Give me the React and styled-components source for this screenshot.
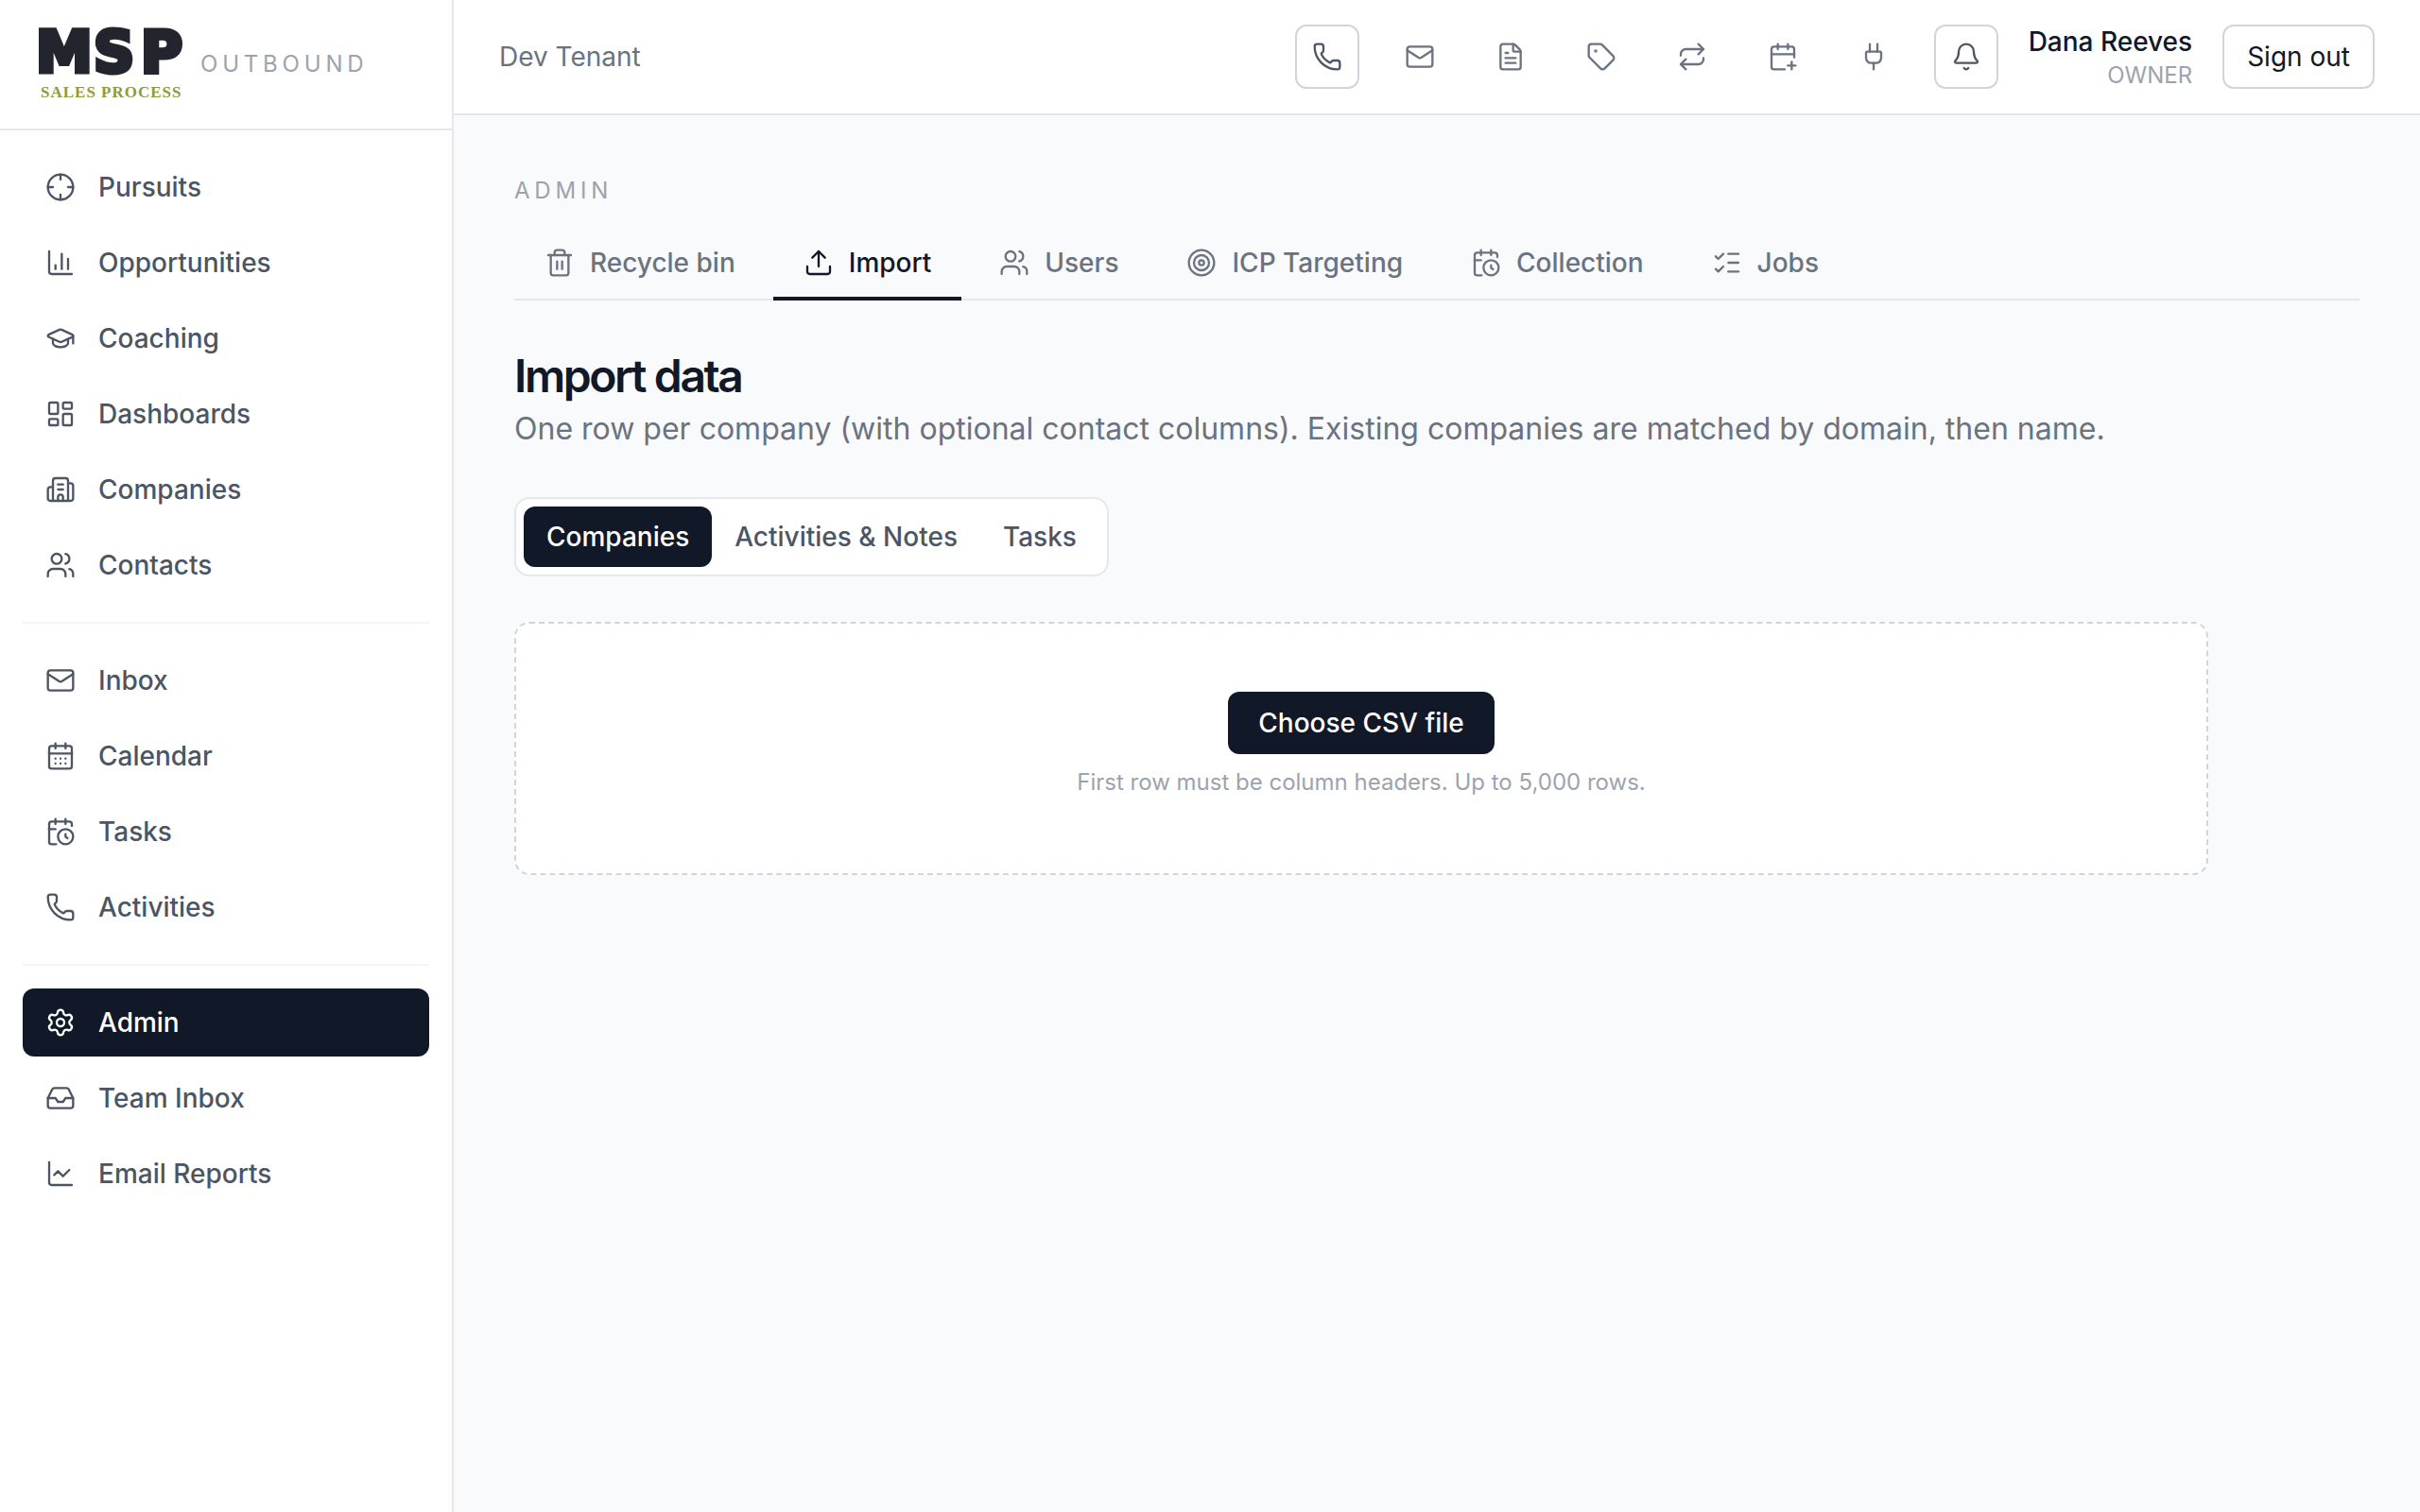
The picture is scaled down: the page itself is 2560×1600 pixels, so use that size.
import React, { useState } from "react";
import styled, { createGlobalStyle, css } from "styled-components";
import {
  Bell,
  Building2,
  CalendarClock,
  CalendarDays,
  CalendarPlus,
  ChartColumn,
  ChartLine,
  Crosshair,
  FileText,
  GraduationCap,
  Inbox,
  LayoutDashboard,
  ListChecks,
  Mail,
  Phone,
  Plug,
  Repeat,
  Settings,
  Tag,
  Target,
  Trash2,
  Upload,
  Users,
} from "lucide-react";

const color = {
  ink: "#111827",
  text: "#4b5563",
  muted: "#6b7280",
  faint: "#9ca3af",
  control: "#d1d5db",
  line: "#e5e7eb",
  hairline: "#f3f4f6",
  page: "#f9fafb",
  surface: "#ffffff",
};

const GlobalStyle = createGlobalStyle`
  *, *::before, *::after { box-sizing: border-box; }
  body {
    margin: 0;
    background: ${color.page};
    color: ${color.ink};
    font-family: Inter, "Liberation Sans", sans-serif;
    font-size: 32px;
    line-height: 48px;
  }
  button { font: inherit; cursor: pointer; }
  a { color: inherit; text-decoration: none; }
  h1, p { margin: 0; }
`;

const bodyText = css`
  font-size: 28px;
  line-height: 40px;
`;

const smallText = css`
  font-size: 24px;
  line-height: 32px;
`;

const Shell = styled.div`
  display: flex;
  min-height: 100vh;
`;

const Sidebar = styled.aside`
  flex: none;
  width: 480px;
  background: ${color.surface};
  border-right: 2px solid ${color.line};
`;

const Brand = styled.div`
  display: flex;
  align-items: center;
  gap: 12px;
  padding: 28px 40px;
  border-bottom: 2px solid ${color.line};
`;

const LogoSvg = styled.svg`
  display: block;
  flex: none;
  overflow: visible;
`;

const Eyebrow = styled.div`
  ${smallText}
  color: ${color.faint};
  letter-spacing: 0.2em;
  text-transform: uppercase;
`;

const Nav = styled.nav`
  display: flex;
  flex-direction: column;
  gap: 8px;
  padding: 24px;
`;

const NavDivider = styled.hr`
  width: 100%;
  margin: 16px 0;
  border: 0;
  border-top: 2px solid ${color.hairline};
`;

const NavLink = styled.a`
  ${bodyText}
  display: flex;
  align-items: center;
  gap: 24px;
  padding: 16px 24px;
  border-radius: 12px;
  font-weight: 500;
  background: ${(p) => (p.$active ? color.ink : "transparent")};
  && { color: ${(p) => (p.$active ? color.surface : color.text)}; }
`;

const Column = styled.div`
  flex: 1;
  min-width: 0;
`;

const TopBar = styled.header`
  display: flex;
  align-items: center;
  justify-content: space-between;
  height: 122px;
  padding: 0 48px;
  background: ${color.surface};
  border-bottom: 2px solid ${color.line};
`;

const Tenant = styled.div`
  ${bodyText}
  color: ${color.muted};
`;

const Actions = styled.div`
  display: flex;
  align-items: center;
  gap: 32px;
`;

const IconButton = styled.button`
  display: flex;
  align-items: center;
  justify-content: center;
  width: 64px;
  height: 64px;
  padding: 0;
  border: 0;
  border-radius: 12px;
  background: transparent;
  color: ${color.muted};
`;

const OutlinedIconButton = styled(IconButton)`
  width: 68px;
  height: 68px;
  border: 2px solid ${color.control};
  color: ${color.text};
`;

const Account = styled.div`
  text-align: right;
`;

const AccountName = styled.div`
  ${bodyText}
  font-weight: 500;
`;

const AccountRole = styled.div`
  ${smallText}
  color: ${color.faint};
`;

const SignOut = styled.button`
  && {
    ${bodyText}
  }
  padding: 12px 24px;
  border: 2px solid ${color.control};
  border-radius: 12px;
  background: ${color.surface};
  color: ${color.ink};
`;

const Main = styled.main`
  padding: 64px;
`;

const Tabs = styled.nav`
  display: flex;
  gap: 8px;
  margin: 24px 0 48px;
  border-bottom: 2px solid ${color.line};
`;

const Tab = styled.a`
  ${bodyText}
  display: flex;
  align-items: center;
  gap: 16px;
  margin-bottom: -2px;
  padding: 16px 32px;
  border-bottom: 4px solid ${(p) => (p.$active ? color.ink : "transparent")};
  font-weight: 500;
  && { color: ${(p) => (p.$active ? color.ink : color.muted)}; }
`;

const Title = styled.h1`
  font-size: 48px;
  line-height: 64px;
  font-weight: 600;
  letter-spacing: -0.05em;
`;

const Lead = styled.p`
  color: ${color.muted};
`;

const Segments = styled.div`
  display: flex;
  width: fit-content;
  margin: 48px 0;
  padding: 8px;
  border: 2px solid ${color.line};
  border-radius: 16px;
  background: ${color.surface};
`;

const Segment = styled.button`
  && {
    ${bodyText}
    font-weight: 500;
  }
  padding: 12px 24px;
  border: 0;
  border-radius: 12px;
  background: ${(p) => (p.$active ? color.ink : "transparent")};
  color: ${(p) => (p.$active ? color.surface : color.text)};
`;

const DropZone = styled.section`
  max-width: 1792px;
  padding: 80px;
  border: 2px dashed ${color.control};
  border-radius: 16px;
  background: ${color.surface};
  text-align: center;
`;

const FileLabel = styled.label`
  ${bodyText}
  padding: 16px 32px;
  border-radius: 12px;
  background: ${color.ink};
  color: ${color.surface};
  font-weight: 500;
  cursor: pointer;
`;

const FileInput = styled.input`
  display: none;
`;

const Hint = styled.p`
  ${smallText}
  margin-top: 24px;
  color: ${color.faint};
`;

const iconProps = { size: 32, strokeWidth: 1.75, "aria-hidden": true };

const navGroups = [
  [
    ["Pursuits", Crosshair],
    ["Opportunities", ChartColumn],
    ["Coaching", GraduationCap],
    ["Dashboards", LayoutDashboard],
    ["Companies", Building2],
    ["Contacts", Users],
  ],
  [
    ["Inbox", Mail],
    ["Calendar", CalendarDays],
    ["Tasks", CalendarClock],
    ["Activities", Phone],
  ],
  [
    ["Admin", Settings],
    ["Team Inbox", Inbox],
    ["Email Reports", ChartLine],
  ],
];

const quickActions = [
  ["Email", Mail],
  ["Notes", FileText],
  ["Tags", Tag],
  ["Sequences", Repeat],
  ["Schedule", CalendarPlus],
  ["Integrations", Plug],
];

const adminTabs = [
  ["Recycle bin", Trash2],
  ["Import", Upload],
  ["Users", Users],
  ["ICP Targeting", Target],
  ["Collection", CalendarClock],
  ["Jobs", ListChecks],
];

const importKinds = ["Companies", "Activities & Notes", "Tasks"];

function Logo() {
  return (
    <LogoSvg width="160" height="80" viewBox="0 0 160 80" role="img" aria-label="MSP Sales Process">
      <text
        x="-2 59 109"
        y="48"
        fontFamily="'DejaVu Sans', sans-serif"
        fontWeight="700"
        fontSize="60"
        fill="#22252d"
        stroke="#22252d"
        strokeWidth="5"
        strokeLinejoin="miter"
      >
        MSP
      </text>
      <text
        x="3"
        y="75"
        fontFamily="'Liberation Serif', serif"
        fontWeight="700"
        fontSize="17"
        letterSpacing="1"
        fill="#8a9c42"
      >
        SALES PROCESS
      </text>
    </LogoSvg>
  );
}

export default function App() {
  const [kind, setKind] = useState("Companies");

  return (
    <>
      <GlobalStyle />
      <Shell>
        <Sidebar>
          <Brand>
            <Logo />
            <Eyebrow>Outbound</Eyebrow>
          </Brand>
          <Nav aria-label="Primary">
            {navGroups.map((group, i) => (
              <React.Fragment key={i}>
                {i > 0 && <NavDivider />}
                {group.map(([label, Icon]) => (
                  <NavLink key={label} href="#" $active={label === "Admin"}>
                    <Icon {...iconProps} />
                    {label}
                  </NavLink>
                ))}
              </React.Fragment>
            ))}
          </Nav>
        </Sidebar>

        <Column>
          <TopBar>
            <Tenant>Dev Tenant</Tenant>
            <Actions>
              <OutlinedIconButton type="button" aria-label="Call">
                <Phone {...iconProps} />
              </OutlinedIconButton>
              {quickActions.map(([label, Icon]) => (
                <IconButton key={label} type="button" aria-label={label}>
                  <Icon {...iconProps} />
                </IconButton>
              ))}
              <OutlinedIconButton type="button" aria-label="Notifications">
                <Bell {...iconProps} />
              </OutlinedIconButton>
              <Account>
                <AccountName>Dana Reeves</AccountName>
                <AccountRole>OWNER</AccountRole>
              </Account>
              <SignOut type="button">Sign out</SignOut>
            </Actions>
          </TopBar>

          <Main>
            <Eyebrow>Admin</Eyebrow>
            <Tabs aria-label="Admin sections">
              {adminTabs.map(([label, Icon]) => (
                <Tab key={label} href="#" $active={label === "Import"}>
                  <Icon {...iconProps} />
                  {label}
                </Tab>
              ))}
            </Tabs>

            <Title>Import data</Title>
            <Lead>
              One row per company (with optional contact columns). Existing companies are matched by
              domain, then name.
            </Lead>

            <Segments>
              {importKinds.map((label) => (
                <Segment
                  key={label}
                  type="button"
                  $active={label === kind}
                  aria-pressed={label === kind}
                  onClick={() => setKind(label)}
                >
                  {label}
                </Segment>
              ))}
            </Segments>

            <DropZone>
              <FileLabel htmlFor="csv-file">Choose CSV file</FileLabel>
              <FileInput id="csv-file" type="file" accept=".csv" />
              <Hint>First row must be column headers. Up to 5,000 rows.</Hint>
            </DropZone>
          </Main>
        </Column>
      </Shell>
    </>
  );
}
